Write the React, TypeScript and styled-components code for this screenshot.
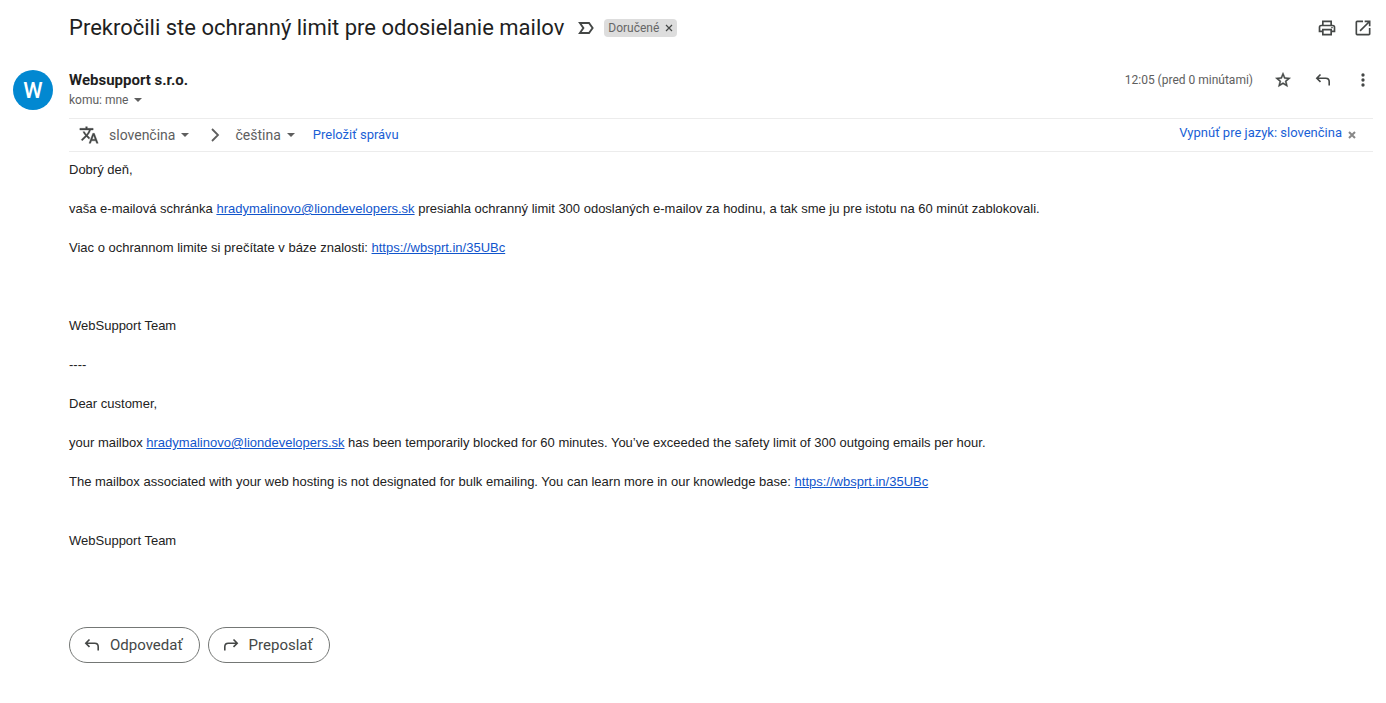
import React from "react";
import styled, { createGlobalStyle } from "styled-components";

const Global = createGlobalStyle`
  * { box-sizing: border-box; }
  body { margin: 0; background: #fff; color: #222; font-family: Roboto, "Liberation Sans", sans-serif; }
  button { font: inherit; color: inherit; background: none; border: 0; padding: 0; cursor: pointer; }
`;

const sans = `"Liberation Sans", Arial, sans-serif`;

const Page = styled.main`
  padding: 8px 13px 24px;
`;

const SubjectRow = styled.header`
  display: flex;
  align-items: center;
  min-height: 40px;
  padding-left: 56px;
`;

const Subject = styled.h1`
  margin: 0;
  font-size: 22px;
  line-height: 28px;
  font-weight: 400;
  color: #1f1f1f;
`;

const IconButton = styled.button<{ $size?: number }>`
  display: flex;
  align-items: center;
  justify-content: center;
  flex: none;
  width: ${(p) => p.$size ?? 20}px;
  height: ${(p) => p.$size ?? 20}px;
  color: #444746;
`;

const Marker = styled(IconButton)`
  margin: 0 8px 0 12px;
`;

const Label = styled.span`
  display: flex;
  align-items: center;
  gap: 6px;
  height: 18px;
  padding: 0 4px;
  border-radius: 4px;
  background: #ddd;
  color: #666;
  font-size: 12px;
  line-height: 18px;
`;

const Actions = styled.div<{ $gap: number }>`
  display: flex;
  align-items: center;
  gap: ${(p) => p.$gap}px;
  margin-left: auto;
`;

const Message = styled.article`
  display: grid;
  grid-template-columns: 40px minmax(0, 1fr);
  column-gap: 16px;
  margin-top: 22px;
`;

const Avatar = styled.div`
  display: flex;
  align-items: center;
  justify-content: center;
  width: 40px;
  height: 40px;
  border-radius: 50%;
  background: #0288d1;
  color: #fff;
  font-size: 22px;
  font-weight: 500;
`;

const SenderRow = styled.div`
  display: flex;
  align-items: flex-start;
`;

const Sender = styled.h2`
  margin: 0;
  font-size: 15px;
  line-height: 20px;
  font-weight: 700;
  color: #1f1f1f;
`;

const Recipient = styled.button`
  display: flex;
  align-items: center;
  gap: 6px;
  font-size: 12px;
  line-height: 20px;
  color: #5e5e5e;
`;

const Time = styled.time`
  font-size: 12px;
  line-height: 20px;
  color: #5e5e5e;
`;

const TranslateBar = styled.div`
  display: flex;
  align-items: center;
  height: 34px;
  margin-top: 8px;
  padding: 0 17px 0 10px;
  border-top: 1px solid #ececec;
  border-bottom: 1px solid #ececec;
  color: #5e5e5e;
  font-size: 14px;
`;

const Language = styled.button`
  display: flex;
  align-items: center;
  gap: 6px;
  line-height: 20px;
`;

const BarLink = styled.a`
  color: #1a5fd6;
  font-size: 13px;
  line-height: 20px;
  text-decoration: none;
`;

const TurnOffLink = styled(BarLink)`
  padding-bottom: 4px;
`;

const TranslateLink = styled(BarLink)`
  margin-left: 18px;
`;

const CloseButton = styled(IconButton)`
  color: #888;
`;

const Chevron = styled.span`
  display: flex;
  margin: 0 14px 0 20px;
`;

const TranslateIcon = styled.span`
  display: flex;
  margin-right: 10px;
  color: #444746;
`;

const Body = styled.div`
  padding-top: 8px;
  font: 13px/20px ${sans};
  color: #222;

  p { margin: 0 0 19px; }
  a { color: #15c; }
`;

const Blank = styled.div<{ $height: number }>`
  height: ${(p) => p.$height}px;
`;

const Replies = styled.footer`
  display: flex;
  gap: 8px;
  margin-top: 76px;
`;

const ReplyButton = styled.button`
  && {
    display: flex;
    align-items: center;
    gap: 8px;
    height: 36px;
    padding: 0 16px 0 12px;
    border: 1px solid #747775;
    border-radius: 18px;
    color: #444746;
    font-size: 15px;
    line-height: 20px;
    font-weight: 400;
  }
`;

type SvgProps = { size?: number; d: string; box?: string; bold?: number };

const Svg = ({ size = 20, d, box = "0 0 24 24", bold = 0 }: SvgProps) => (
  <svg width={size} height={size} viewBox={box} fill="currentColor" stroke={bold ? "currentColor" : "none"} strokeWidth={bold} aria-hidden="true">
    <path d={d} />
  </svg>
);

const Reply = ({ flip = false }: { flip?: boolean }) => (
  <svg width="20" height="20" viewBox="0 0 20 20" fill="none" stroke="currentColor" strokeWidth="1.6" aria-hidden="true">
    <path d={flip ? "M12.500 4.500 16.200 8.200 12.500 11.900M16 8.200H7.300Q3.800 8.200 3.800 11.700V15.500" : "M7.500 4.500 3.800 8.200 7.500 11.900M4 8.200H12.700Q16.200 8.200 16.200 11.700V15.500"} />
  </svg>
);

const Caret = () => <Svg size={8} box="0 0 8 8" d="M0 2h8L4 6z" />;

const Cross = ({ width = 1.2 }: { width?: number }) => (
  <svg width="8" height="8" viewBox="0 0 8 8" stroke="currentColor" strokeWidth={width} aria-hidden="true">
    <path d="M1 1l6 6M7 1L1 7" />
  </svg>
);

const icons = {
  print: "M16 8V5H8v3H6V3h12v5h-2zM18 12.5a1 1 0 1 0 0-2 1 1 0 0 0 0 2zM16 19v-4H8v4h8zm2 2H6v-4H2v-6a3 3 0 0 1 3-3h14a3 3 0 0 1 3 3v6h-4v4zm2-6v-4a1 1 0 0 0-1-1H5a1 1 0 0 0-1 1v4h2v-2h12v2h2z",
  open: "M19 19H5V5h7V3H5a2 2 0 0 0-2 2v14a2 2 0 0 0 2 2h14c1.1 0 2-.9 2-2v-7h-2v7zM14 3v2h3.59l-9.83 9.83 1.41 1.41L19 6.41V10h2V3h-7z",
  star: "M22 9.24l-7.19-.62L12 2 9.19 8.63 2 9.24l5.46 4.73L5.82 21 12 17.27 18.18 21l-1.63-7.03L22 9.24zM12 15.4l-3.76 2.27 1-4.28-3.32-2.88 4.38-.38L12 6.1l1.71 4.04 4.38.38-3.32 2.88 1 4.28L12 15.4z",
  more: "M12 8a2 2 0 1 0 0-4 2 2 0 0 0 0 4zm0 2a2 2 0 1 0 0 4 2 2 0 0 0 0-4zm0 6a2 2 0 1 0 0 4 2 2 0 0 0 0-4z",
  translate: "M12.87 15.07l-2.54-2.51.03-.03A17.52 17.52 0 0 0 14.07 6H17V4h-7V2H8v2H1v1.99h11.17C11.5 7.92 10.44 9.75 9 11.35 8.07 10.32 7.3 9.19 6.69 8h-2c.73 1.63 1.73 3.17 2.98 4.56l-5.09 5.02L4 19l5-5 3.11 3.11.76-2.04zM18.5 10h-2L12 22h2l1.12-3h4.75L21 22h2l-4.500-12zm-2.62 7l1.62-4.33L19.12 17h-3.24z",
};

export default function App() {
  return (
    <Page>
      <Global />
      <SubjectRow>
        <Subject>Prekročili ste ochranný limit pre odosielanie mailov</Subject>
        <Marker aria-label="Dôležité">
          <svg width="20" height="20" viewBox="0 0 20 20" fill="none" stroke="currentColor" strokeWidth="1.9" aria-hidden="true">
            <path d="M3.900 5H13L16.600 10 13 15H3.900L7.400 10z" />
          </svg>
        </Marker>
        <Label>Doručené<IconButton $size={8} aria-label="Odstrániť štítok"><Cross /></IconButton></Label>
        <Actions $gap={16}>
          <IconButton aria-label="Tlačiť"><Svg d={icons.print} /></IconButton>
          <IconButton aria-label="Nové okno"><Svg d={icons.open} /></IconButton>
        </Actions>
      </SubjectRow>
      <Message>
        <Avatar>W</Avatar>
        <div>
          <SenderRow>
            <div>
              <Sender>Websupport s.r.o.</Sender>
              <Recipient>komu: mne <Caret /></Recipient>
            </div>
            <Actions $gap={20}>
              <Time>12:05 (pred 0 minútami)</Time>
              <IconButton aria-label="Hviezdička"><Svg size={18} d={icons.star} bold={0.6} /></IconButton>
              <IconButton aria-label="Odpovedať"><Reply /></IconButton>
              <IconButton aria-label="Viac"><Svg d={icons.more} /></IconButton>
            </Actions>
          </SenderRow>
          <TranslateBar>
            <TranslateIcon><Svg d={icons.translate} bold={0.4} /></TranslateIcon>
            <Language>slovenčina <Caret /></Language>
            <Chevron>
              <svg width="12" height="14" viewBox="0 0 12 14" fill="none" stroke="currentColor" strokeWidth="1.8" aria-hidden="true"><path d="M3 1l6 6-6 6" /></svg>
            </Chevron>
            <Language>čeština <Caret /></Language>
            <TranslateLink href="#translate">Preložiť správu</TranslateLink>
            <Actions $gap={6}>
              <TurnOffLink href="#off">Vypnúť pre jazyk: slovenčina</TurnOffLink>
              <CloseButton $size={8} aria-label="Zavrieť"><Cross width={2} /></CloseButton>
            </Actions>
          </TranslateBar>
          <Body>
            <p>Dobrý deň,</p>
            <p>vaša e-mailová schránka <a href="mailto:hradymalinovo@liondevelopers.sk">hradymalinovo@liondevelopers.sk</a> presiahla ochranný limit 300 odoslaných e-mailov za hodinu, a tak sme ju pre istotu na 60 minút zablokovali.</p>
            <p>Viac o ochrannom limite si prečítate v báze znalosti: <a href="https://wbsprt.in/35UBc">https://wbsprt.in/35UBc</a></p>
            <Blank $height={39} />
            <p>WebSupport Team</p>
            <p>----</p>
            <p>Dear customer,</p>
            <p>your mailbox <a href="mailto:hradymalinovo@liondevelopers.sk">hradymalinovo@liondevelopers.sk</a> has been temporarily blocked for 60 minutes. You’ve exceeded the safety limit of 300 outgoing emails per hour.</p>
            <p>The mailbox associated with your web hosting is not designated for bulk emailing. You can learn more in our knowledge base: <a href="https://wbsprt.in/35UBc">https://wbsprt.in/35UBc</a></p>
            <Blank $height={20} />
            <p>WebSupport Team</p>
          </Body>
          <Replies>
            <ReplyButton><Reply />Odpovedať</ReplyButton>
            <ReplyButton><Reply flip />Preposlať</ReplyButton>
          </Replies>
        </div>
      </Message>
    </Page>
  );
}
